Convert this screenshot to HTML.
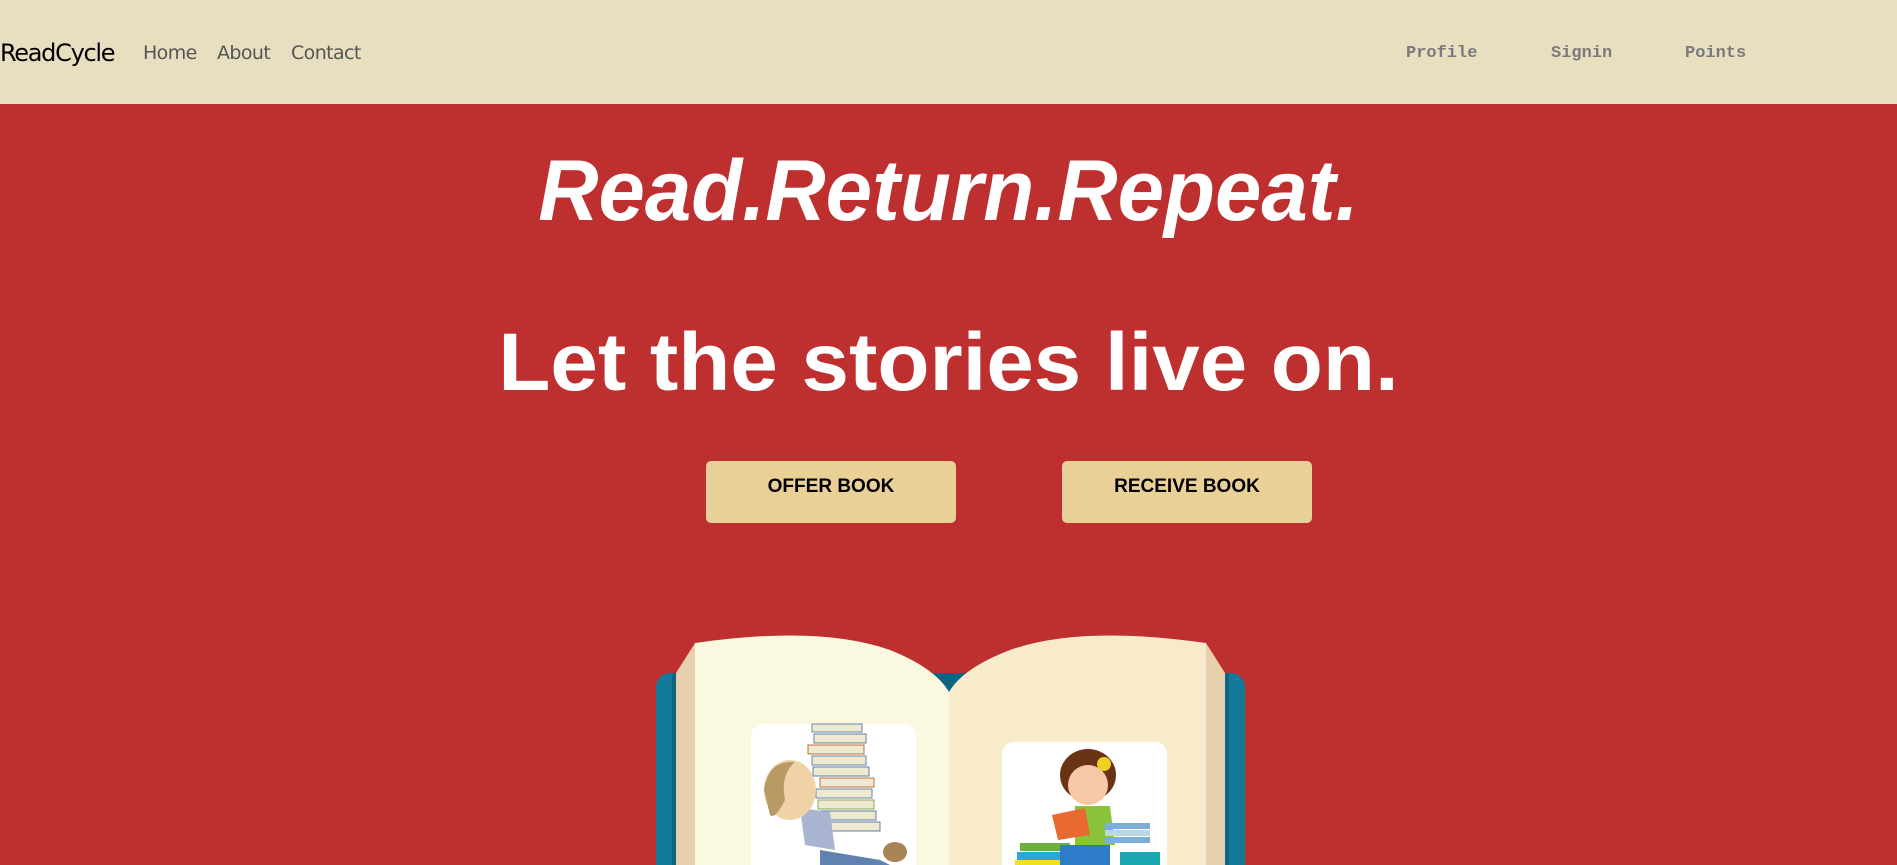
<!DOCTYPE html>
<html><head><meta charset="utf-8"><style>
html,body{margin:0;padding:0;width:1897px;height:865px;overflow:hidden;background:#be2f30;font-family:"Liberation Sans",sans-serif}
.nav{position:absolute;left:0;top:0;width:1897px;height:104px;background:#e8dfc1}
.t{position:absolute;white-space:nowrap;line-height:1}
.brand{left:0;top:41px;font-size:24px;color:#000;font-family:"DejaVu Sans","Liberation Sans",sans-serif;letter-spacing:-1.3px}
.nl{top:44px;font-size:19px;color:#555;font-family:"DejaVu Sans","Liberation Sans",sans-serif;letter-spacing:-0.6px}
.nr{top:45px;font-size:17px;color:#7a7a7a;font-weight:bold;font-family:"Liberation Mono",monospace}
.h1{left:0;width:1897px;text-align:center;color:#fff;font-weight:bold}
.btn{position:absolute;top:461px;width:250px;height:62px;background:#e9d096;border-radius:5px;text-align:center;font-weight:bold;font-size:19px;color:#000;box-sizing:border-box;padding-top:15px}
</style></head><body>
<div class="nav"></div>
<div class="t brand">ReadCycle</div>
<div class="t nl" style="left:143px">Home</div>
<div class="t nl" style="left:217px">About</div>
<div class="t nl" style="left:291px">Contact</div>
<div class="t nr" style="left:1406px">Profile</div>
<div class="t nr" style="left:1551px">Signin</div>
<div class="t nr" style="left:1685px">Points</div>
<div class="t h1" style="top:148px;font-size:86px;font-style:italic;transform:scaleX(0.97)">Read.Return.Repeat.</div>
<div class="t h1" style="top:322px;font-size:82px;transform:scaleX(1.04)">Let the stories live on.</div>
<div class="btn" style="left:706px">OFFER BOOK</div>
<div class="btn" style="left:1062px">RECEIVE BOOK</div>
<svg style="position:absolute;left:0;top:0" width="1897" height="865">
<rect x="656" y="673" width="589" height="220" rx="14" fill="#137a9a"/>
<rect x="672" y="673" width="557" height="220" fill="#0d6582"/>
<path d="M676 673 L695 643 L695 865 L676 865Z" fill="#e6d0ae"/>
<path d="M1225 673 L1206 643 L1206 865 L1225 865Z" fill="#e6d0ae"/>
<path d="M695 643 Q820 625 890 650 Q935 668 949 692 L949 865 L695 865Z" fill="#fbf8e0"/>
<path d="M1206 643 Q1080 625 1010 650 Q963 668 949 692 L949 865 L1206 865Z" fill="#f8ebcb"/>
<rect x="751" y="724" width="165" height="160" rx="12" fill="#fff"/>
<rect x="1002" y="742" width="165" height="140" rx="12" fill="#fff"/>
<g>
<rect x="812" y="724" width="50" height="8" fill="#efe9d0" stroke="#6a86a8"/>
<rect x="814" y="734" width="52" height="9" fill="#efe9d0" stroke="#5d7fa8"/>
<rect x="808" y="745" width="56" height="9" fill="#efe9d0" stroke="#c07040"/>
<rect x="812" y="756" width="54" height="9" fill="#efe9d0" stroke="#6a86a8"/>
<rect x="813" y="767" width="56" height="9" fill="#efe9d0" stroke="#5d7fa8"/>
<rect x="820" y="778" width="54" height="9" fill="#efe9d0" stroke="#c07040"/>
<rect x="816" y="789" width="56" height="9" fill="#efe9d0" stroke="#6a86a8"/>
<rect x="818" y="800" width="56" height="9" fill="#efe9d0" stroke="#8aa860"/>
<rect x="820" y="811" width="56" height="9" fill="#efe9d0" stroke="#5d7fa8"/>
<rect x="826" y="822" width="54" height="9" fill="#efe9d0" stroke="#5d7fa8"/>
<path d="M800 808 L830 812 L835 850 L805 845Z" fill="#a8b4d0"/>
<ellipse cx="790" cy="790" rx="26" ry="30" fill="#efd3a6"/>
<path d="M764 790 Q768 760 795 762 Q780 775 785 800 Q775 820 770 815Z" fill="#b99a64"/>
<path d="M820 850 L880 860 L890 865 L820 865Z" fill="#5f82b0"/>
<ellipse cx="895" cy="852" rx="12" ry="10" fill="#a88456"/>
</g>
<g>
<ellipse cx="1088" cy="775" rx="28" ry="26" fill="#6a3414"/>
<ellipse cx="1088" cy="785" rx="20" ry="20" fill="#f6c8a8"/>
<circle cx="1104" cy="764" r="7" fill="#f0d020"/>
<path d="M1075 806 L1110 806 L1115 845 L1075 845Z" fill="#8ac33a"/>
<path d="M1052 815 L1085 808 L1090 835 L1058 840Z" fill="#e86a30"/>
<rect x="1105" y="823" width="45" height="6" fill="#7ab0d8"/>
<rect x="1105" y="830" width="45" height="6" fill="#b8d8e8"/>
<rect x="1105" y="837" width="45" height="6" fill="#7ab0d8"/>
<rect x="1020" y="843" width="50" height="8" fill="#6cb040"/>
<rect x="1017" y="852" width="55" height="8" fill="#2ba8d8"/>
<rect x="1015" y="860" width="60" height="5" fill="#f0e020"/>
<path d="M1060 845 L1110 845 L1110 865 L1060 865Z" fill="#2c7cc8"/>
<rect x="1120" y="852" width="40" height="13" fill="#1aa8b0"/>
</g>
</svg>
</body></html>
